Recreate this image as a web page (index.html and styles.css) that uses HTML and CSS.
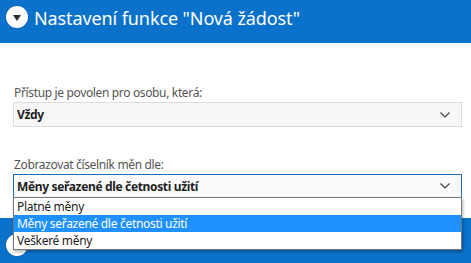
FILE: index.html
```html
<!DOCTYPE html>
<html lang="cs">
<head>
  <meta charset="UTF-8" />
  <title>Nastavení funkce</title>
  <link rel="stylesheet" href="styles.css">
</head>
<body>
  <div class="panel-header">
    <span class="toggle"><span class="caret"></span></span>
    <h1 class="panel-title">Nastavení funkce "Nová žádost"</h1>
  </div>

  <div class="panel-body">
    <div class="form-group">
      <label class="form-label">Přístup je povolen pro osobu, která:</label>
      <div class="select">
        <span class="select-value">Vždy</span>
        <svg class="chevron" width="10" height="6" viewBox="0 0 10 6"><path d="M0.5 0.5 L5 5 L9.5 0.5" fill="none" stroke="#444" stroke-width="1.2"/></svg>
      </div>
    </div>

    <div class="form-group group-last">
      <label class="form-label">Zobrazovat číselník měn dle:</label>
      <div class="select select-open">
        <span class="select-value">Měny seřazené dle četnosti užití</span>
        <svg class="chevron" width="10" height="6" viewBox="0 0 10 6"><path d="M0.5 0.5 L5 5 L9.5 0.5" fill="none" stroke="#444" stroke-width="1.2"/></svg>
        <ul class="options">
          <li>Platné měny</li>
          <li class="selected">Měny seřazené dle četnosti užití</li>
          <li>Veškeré měny</li>
        </ul>
      </div>
    </div>
  </div>

  <div class="panel-header panel-next">
    <span class="toggle"><span class="caret"></span></span>
  </div>
</body>
</html>
```

FILE: styles.css
```css
body {
  margin: 0;
  font-family: 'Noto Sans', 'Open Sans', sans-serif;
  background-color: #ffffff;
  color: #333;
  overflow: hidden;
}

.panel-header {
  background-color: #0b72cc;
  height: 43px;
  display: flex;
  align-items: flex-start;
  padding: 6px 0 0 6px;
  box-sizing: border-box;
  gap: 6px;
}

.toggle {
  width: 22px;
  height: 22px;
  border-radius: 50%;
  background-color: #fff;
  box-shadow: 0 0 2px rgba(0, 0, 0, 0.3);
  display: flex;
  justify-content: center;
  align-items: center;
  flex-shrink: 0;
}

.caret {
  width: 0;
  height: 0;
  border-left: 4px solid transparent;
  border-right: 4px solid transparent;
  border-top: 6px solid #2b2b2b;
  margin-top: 2px;
}

.panel-title {
  margin: 0;
  padding-top: 1px;
  color: #fff;
  font-size: 18px;
  font-weight: 400;
  line-height: 22px;
  letter-spacing: -0.1px;
}

.panel-body {
  padding: 42px 9px 20px 13px;
}

.form-group {
  margin-bottom: 30px;
}

.group-last {
  margin-bottom: 0;
}

.form-label {
  display: block;
  font-size: 12px;
  letter-spacing: -0.35px;
  color: #555;
  line-height: 16px;
  margin-bottom: 1px;
  padding-left: 1px;
}

.select {
  position: relative;
  height: 25px;
  box-sizing: border-box;
  border: 1px solid #dcdcdc;
  background-color: #f7f7f7;
  display: flex;
  align-items: center;
  padding: 0 11px 0 3px;
}

.select-value {
  flex: 1;
  font-size: 12px;
  font-weight: 700;
  letter-spacing: -0.35px;
  color: #222;
}

.select-open {
  height: 24px;
  border-color: #1f6fc0;
  background-color: #fafafa;
}

.options {
  position: absolute;
  left: -1px;
  right: -1px;
  top: 22px;
  margin: 0;
  padding: 0;
  list-style: none;
  background-color: #fff;
  border: 1px solid #767676;
  box-shadow: 1px 2px 3px rgba(0, 0, 0, 0.3);
  z-index: 2;
}

.options li {
  font-size: 12px;
  letter-spacing: -0.3px;
  line-height: 17px;
  padding-left: 3px;
  color: #222;
}

.options .selected {
  background-color: #1e90ff;
  color: #fff;
}

.panel-next {
  height: 45px;
  padding-top: 16px;
}
```
